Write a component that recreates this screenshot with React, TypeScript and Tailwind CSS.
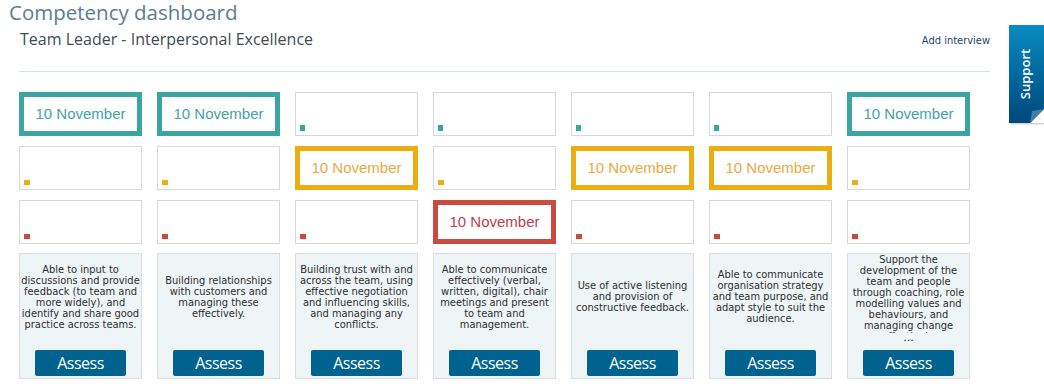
import React from 'react';

type Tone = 'teal' | 'yellow' | 'red';

interface Competency {
  marks: [boolean, boolean, boolean];
  lines: string[];
  truncated?: boolean;
}

const competencies: Competency[] = [
  {
    marks: [true, false, false],
    lines: ['Able to input to', 'discussions and provide', 'feedback (to team and', 'more widely), and', 'identify and share good', 'practice across teams.'],
  },
  {
    marks: [true, false, false],
    lines: ['Building relationships', 'with customers and', 'managing these', 'effectively.'],
  },
  {
    marks: [false, true, false],
    lines: ['Building trust with and', 'across the team, using', 'effective negotiation', 'and influencing skills,', 'and managing any', 'conflicts.'],
  },
  {
    marks: [false, false, true],
    lines: ['Able to communicate', 'effectively (verbal,', 'written, digital), chair', 'meetings and present', 'to team and', 'management.'],
  },
  {
    marks: [false, true, false],
    lines: ['Use of active listening', 'and provision of', 'constructive feedback.'],
  },
  {
    marks: [false, true, false],
    lines: ['Able to communicate', 'organisation strategy', 'and team purpose, and', 'adapt style to suit the', 'audience.'],
  },
  {
    marks: [true, false, false],
    lines: ['Support the', 'development of the', 'team and people', 'through coaching, role', 'modelling values and', 'behaviours, and', 'managing change', 'effectively.'],
    truncated: true,
  },
];

const tones: Tone[] = ['teal', 'yellow', 'red'];

const selectedStyle: Record<Tone, string> = {
  teal: 'border-[#3aa5a1] text-[#44a3a6]',
  yellow: 'border-[#eaae10] text-[#eba941]',
  red: 'border-[#c94a3f] text-[#c23c4a]',
};

const dotStyle: Record<Tone, string> = {
  teal: 'bg-[#3aa5a1] w-[5px] h-[6px]',
  yellow: 'bg-[#eaae10] w-[6px] h-[5px]',
  red: 'bg-[#c94a3f] w-[6px] h-[5px]',
};

const Slot: React.FC<{ tone: Tone; selected: boolean }> = ({ tone, selected }) => {
  if (selected) {
    return (
      <div
        className={`h-[44px] border-[5px] ${selectedStyle[tone]} flex items-center justify-center text-[15px] font-['Liberation_Sans',sans-serif]`}
      >
        10 November
      </div>
    );
  }
  return (
    <div className="h-[44px] border border-[#d8d8d8] flex items-end pl-[4px] pb-[4px]">
      <div className={dotStyle[tone]} />
    </div>
  );
};

const descText =
  "text-center text-[11px] leading-[11px] text-[#2e2e2e] font-['DejaVu_Sans_Condensed','DejaVu_Sans',sans-serif] [font-stretch:condensed]";

const CompetencyColumn: React.FC<{ item: Competency }> = ({ item }) => (
  <div className="flex flex-col">
    <div className="flex flex-col gap-[10px]">
      {tones.map((tone, i) => (
        <Slot key={tone} tone={tone} selected={item.marks[i]} />
      ))}
    </div>
    <div className="mt-[9px] h-[126px] bg-[#eff4f7] border border-[#dadee1] flex flex-col items-center">
      {item.truncated ? (
        <div className="w-full flex flex-col items-center">
          <div className={`h-[79px] overflow-hidden ${descText}`}>
            {item.lines.map((l) => (
              <div key={l} className="whitespace-nowrap">{l}</div>
            ))}
          </div>
          <div className="text-[11px] leading-[9px] text-[#2e2e2e] font-['DejaVu_Sans',sans-serif]">...</div>
        </div>
      ) : (
        <div className={`h-[85px] w-full flex flex-col items-center justify-center ${descText}`}>
          {item.lines.map((l) => (
            <div key={l} className="whitespace-nowrap">{l}</div>
          ))}
        </div>
      )}
      <div className="mt-auto mb-[2px] w-[91px] h-[26px] rounded-[2px] bg-[#00628f] text-white flex items-center justify-center text-[16px] font-medium font-['Open_Sans',sans-serif] tracking-[-0.5px]">
        Assess
      </div>
    </div>
  </div>
);

const SupportTab: React.FC = () => (
  <div className="absolute left-[1009px] top-[25px] w-[40px] h-[98px] bg-gradient-to-b from-[#0b8bc1] to-[#00487c] shadow-[1px_1px_2px_rgba(0,0,0,0.25)]">
    <div className="absolute left-[17px] top-[49px] -translate-x-1/2 -translate-y-1/2 -rotate-90 whitespace-nowrap text-white font-semibold text-[13px] font-['Open_Sans',sans-serif]">
      Support
    </div>
    <svg className="absolute left-[21px] bottom-0" width="14" height="14" viewBox="0 0 14 14">
      <polygon points="14,0 14,14 0,14" fill="#ffffff" />
      <polygon points="14,0 0,14 2,2" fill="#3d7fae" />
    </svg>
  </div>
);

export default function App() {
  return (
    <div className="relative w-[1044px] h-[390px] bg-white overflow-hidden">
      <h1 className="pl-[9px] text-[20.5px] leading-[24px] text-[#5b7c92] font-['Open_Sans',sans-serif]">
        Competency dashboard
      </h1>
      <div className="pl-[19px] pr-[54px]">
        <div className="flex items-end justify-between pl-[1px] mt-[5px]">
          <h2 className="text-[16px] leading-[20px] text-[#414a52] font-['Open_Sans',sans-serif]">
            Team Leader - Interpersonal Excellence
          </h2>
          <a className="text-[11px] leading-[14px] text-[#244568] font-['DejaVu_Sans_Condensed','DejaVu_Sans',sans-serif] [font-stretch:condensed] mb-[1px]">
            Add interview
          </a>
        </div>
        <div className="mt-[22px] h-px bg-[#cde5ee]" />
        <div className="mt-[20px] grid grid-cols-[repeat(7,123px)] gap-x-[15px]">
          {competencies.map((c, i) => (
            <CompetencyColumn key={i} item={c} />
          ))}
        </div>
      </div>
      <SupportTab />
    </div>
  );
}
